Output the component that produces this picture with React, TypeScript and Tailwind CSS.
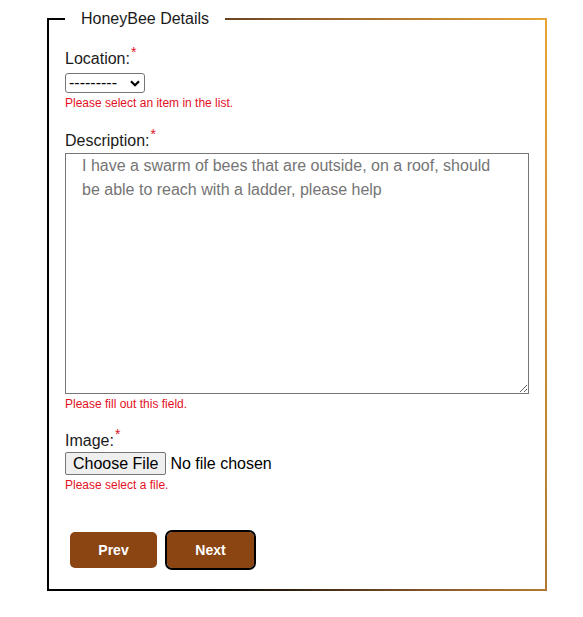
import React from 'react';

// Required-field label with the small red asterisk
function FieldLabel({ htmlFor, children }: { htmlFor: string; children: React.ReactNode }) {
  return (
    <label htmlFor={htmlFor} className="block text-base leading-[18px]">
      {children}
      <span className="relative -top-[7px] ml-[1px] text-[14px] leading-[14px] text-[#e3101f]">*</span>
    </label>
  );
}

function ErrorText({ children }: { children: React.ReactNode }) {
  return <div className="mt-[3px] text-[12px] leading-[14px] text-[#e3101f]">{children}</div>;
}

export default function App() {
  return (
    <div className="min-h-[617px] bg-white pl-[47px] pt-[10px] font-['Liberation_Sans',Arial,sans-serif] text-[#1a1a1a]">
      <form onSubmit={(e) => e.preventDefault()}>
        <fieldset className="w-[500px] border-2 border-solid px-4 pb-[21px] pt-[22px] [border-image:linear-gradient(75deg,#000_25%,#8b5a2b_60%,#e8a536)_1]">
          <legend className="px-4 text-base leading-[18px] text-[#1a1a1a]">HoneyBee Details</legend>

          {/* Location */}
          <FieldLabel htmlFor="location">Location:</FieldLabel>
          <div className="relative mt-[5px] w-[80px]">
            <select
              id="location"
              defaultValue=""
              className="block h-[20px] w-[80px] appearance-none rounded-[3px] border border-[#767676] bg-white pl-[3px] text-base leading-[18px] text-black"
            >
              <option value="">---------</option>
              <option value="1">Front yard</option>
              <option value="2">Back yard</option>
            </select>
            <svg
              className="pointer-events-none absolute right-[5px] top-[7px]"
              width="10"
              height="7"
              viewBox="0 0 10 7"
              fill="none"
            >
              <path d="M1 1.2 5 5.2 9 1.2" stroke="#000" strokeWidth="2.2" />
            </svg>
          </div>
          <ErrorText>Please select an item in the list.</ErrorText>

          {/* Description */}
          <div className="mt-[22px]">
            <FieldLabel htmlFor="description">Description:</FieldLabel>
          </div>
          <textarea
            id="description"
            placeholder="I have a swarm of bees that are outside, on a roof, should be able to reach with a ladder, please help"
            className="mt-[3px] block h-[241px] w-full border border-[#767676] bg-white px-4 py-0 text-base leading-[24px] placeholder:text-[#757575]"
          />
          <ErrorText>Please fill out this field.</ErrorText>

          {/* Image */}
          <div className="mt-[21px]">
            <FieldLabel htmlFor="image">Image:</FieldLabel>
          </div>
          <input
            id="image"
            type="file"
            className="mt-[2px] block h-[23px] text-base leading-[18px] text-black file:mr-[4px] file:h-[23px] file:rounded-[2px] file:border file:border-solid file:border-[#767676] file:bg-[#efefef] file:px-[7px] file:py-0 file:text-base file:leading-[18px] file:text-black"
          />
          <ErrorText>Please select a file.</ErrorText>

          {/* Navigation */}
          <div className="ml-[5px] mt-[40px] flex gap-[10px]">
            <button
              type="button"
              className="h-[36px] w-[87px] rounded-[5px] bg-[#8b4513] text-[14px] font-bold text-white"
            >
              Prev
            </button>
            <button
              type="submit"
              className="h-[36px] w-[87px] rounded-[5px] bg-[#8b4513] text-[14px] font-bold text-white outline-2 outline-black"
            >
              Next
            </button>
          </div>
        </fieldset>
      </form>
    </div>
  );
}
